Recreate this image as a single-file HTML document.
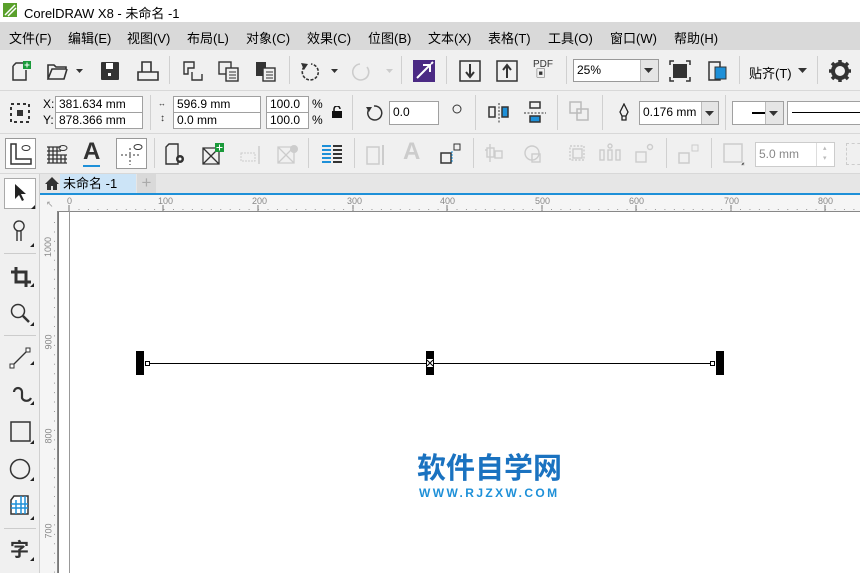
<!DOCTYPE html>
<html><head><meta charset="utf-8"><style>
*{margin:0;padding:0;box-sizing:border-box}
body{width:860px;height:573px;overflow:hidden;background:#f0f0f0;font-family:"Liberation Sans","Noto Sans CJK SC",sans-serif;position:relative;font-size:12px;color:#000}
.a{position:absolute}
.menu span{position:absolute;top:6px;font-size:13px}
.inp{position:absolute;background:#fff;border:1px solid #a0a0a0;font-size:12px;padding-left:3px;line-height:15px}
.sep{position:absolute;width:1px;background:#d0d0d0}
.hl{position:absolute;height:1px;background:#d8d8d8}
.ic{position:absolute}
.rl{position:absolute;font-size:9px;color:#888}
</style></head><body>
<div class="a" style="left:0;top:0;width:860px;height:22px;background:#fff"></div>
<svg class="a" style="left:3px;top:3px" width="14" height="14"><rect width="14" height="14" fill="#5aa02c"/><path d="M2 12 L12 2 M5 13 L13 5" stroke="#fff" stroke-width="1.5"/></svg>
<div class="a" style="left:24px;top:3px;font-size:13px">CorelDRAW X8 - 未命名 -1</div>
<div class="a menu" style="left:0;top:22px;width:860px;height:28px;background:#d9d9d9">
<span style="left:9px">文件(F)</span><span style="left:68px">编辑(E)</span><span style="left:127px">视图(V)</span><span style="left:187px">布局(L)</span><span style="left:246px">对象(C)</span><span style="left:307px">效果(C)</span><span style="left:368px">位图(B)</span><span style="left:428px">文本(X)</span><span style="left:488px">表格(T)</span><span style="left:548px">工具(O)</span><span style="left:610px">窗口(W)</span><span style="left:674px">帮助(H)</span>
</div>
<div class="hl" style="left:0;top:90px;width:860px"></div>
<div class="hl" style="left:0;top:133px;width:860px"></div>
<div class="hl" style="left:0;top:173px;width:860px"></div>
<svg class="ic" style="left:9px;top:60px" width="22" height="22"><path d="M4 6 L7 3 H14 M4 6 V20 H17 V10" fill="none" stroke="#333" stroke-width="1.5"/><rect x="14" y="1" width="8" height="8" fill="#1a9a3a"/><path d="M18 2.5V7.5M15.5 5H20.5" stroke="#fff"/></svg>
<svg class="ic" style="left:46px;top:61px" width="40" height="20"><path d="M2 18 V4 H8 L10 6 H20 V8 H6 L2 18 H18 L21 8" fill="none" stroke="#333" stroke-width="1.6"/><path d="M30 8 h7 l-3.5 4z" fill="#333"/></svg>
<svg class="ic" style="left:100px;top:61px" width="20" height="20"><rect x="1" y="1" width="18" height="18" rx="1" fill="#333"/><rect x="6" y="2" width="7" height="6" fill="#fff"/><rect x="8" y="12" width="3" height="3" fill="#fff"/></svg>
<svg class="ic" style="left:137px;top:60px" width="22" height="22"><path d="M5 12 V2 H14 V12 M1 12 H21 V20 H1Z" fill="none" stroke="#333" stroke-width="1.6"/></svg>
<div class="sep" style="left:169px;top:56px;height:28px"></div>
<svg class="ic" style="left:182px;top:60px" width="22" height="22"><path d="M2 2 H12 V8 H6 V14 H2Z M10 12 V20 H20 V14" fill="none" stroke="#333" stroke-width="1.4"/></svg>
<svg class="ic" style="left:218px;top:60px" width="22" height="22"><rect x="1" y="2" width="12" height="12" fill="none" stroke="#333" stroke-width="1.4"/><rect x="8" y="8" width="12" height="13" fill="#f0f0f0" stroke="#333" stroke-width="1.4"/><path d="M11 12h7M11 15h7M11 18h7" stroke="#333"/></svg>
<svg class="ic" style="left:255px;top:60px" width="22" height="22"><rect x="1" y="2" width="10" height="14" fill="#333"/><rect x="8" y="8" width="12" height="13" fill="#f0f0f0" stroke="#333" stroke-width="1.4"/><path d="M11 12h7M11 15h7M11 18h7" stroke="#333"/></svg>
<div class="sep" style="left:289px;top:56px;height:28px"></div>
<svg class="ic" style="left:299px;top:61px" width="45" height="20"><path d="M5 6 A8 8 0 1 0 12 3" fill="none" stroke="#333" stroke-width="1.6" stroke-dasharray="3 1.5"/><path d="M2 2 L9 3 L5 9z" fill="#333"/><path d="M32 8 h7 l-3.5 4z" fill="#333"/></svg>
<svg class="ic" style="left:352px;top:61px" width="45" height="20"><path d="M15 6 A8 8 0 1 1 8 3" fill="none" stroke="#ccc" stroke-width="1.6"/><path d="M34 8 h7 l-3.5 4z" fill="#ccc"/></svg>
<div class="sep" style="left:401px;top:56px;height:28px"></div>
<svg class="ic" style="left:413px;top:60px" width="22" height="22"><rect width="22" height="22" fill="#4b2a84"/><path d="M4 18 L17 5 M10 5 H17 V12 M18 4 L20 2" stroke="#fff" stroke-width="2" fill="none"/></svg>
<div class="sep" style="left:446px;top:56px;height:28px"></div>
<svg class="ic" style="left:459px;top:60px" width="22" height="22"><rect x="1" y="1" width="20" height="20" fill="none" stroke="#333" stroke-width="1.5"/><path d="M11 4 V16 M7 12 L11 17 L15 12" stroke="#333" stroke-width="2" fill="none"/></svg>
<svg class="ic" style="left:496px;top:60px" width="22" height="22"><rect x="1" y="1" width="20" height="20" fill="none" stroke="#333" stroke-width="1.5"/><path d="M11 18 V6 M7 10 L11 5 L15 10" stroke="#333" stroke-width="2" fill="none"/></svg>
<div class="a" style="left:533px;top:60px;font-size:10px;color:#333;line-height:10px">PDF<br>&nbsp;▣</div>
<div class="sep" style="left:566px;top:56px;height:28px"></div>
<div class="inp" style="left:573px;top:59px;width:86px;height:23px;line-height:20px;border-color:#999">25%</div>
<div class="a" style="left:640px;top:60px;width:18px;height:21px;background:#e5e5e5;border-left:1px solid #bbb"></div>
<svg class="a" style="left:644px;top:68px" width="10" height="6"><path d="M0 0h9l-4.5 5z" fill="#333"/></svg>
<svg class="ic" style="left:669px;top:60px" width="22" height="22"><rect x="4" y="4" width="14" height="14" fill="#333"/><path d="M1 5V1H5M17 1H21V5M21 17V21H17M5 21H1V17" fill="none" stroke="#333" stroke-width="1.5"/></svg>
<svg class="ic" style="left:707px;top:60px" width="22" height="22"><rect x="2" y="2" width="11" height="18" fill="none" stroke="#333" stroke-width="1.5"/><rect x="8" y="7" width="11" height="12" fill="#1e90d8" stroke="#333"/></svg>
<div class="sep" style="left:739px;top:56px;height:28px"></div>
<div class="a" style="left:749px;top:63px;font-size:13px">贴齐(T)</div>
<svg class="a" style="left:798px;top:68px" width="10" height="6"><path d="M0 0h9l-4.5 5z" fill="#333"/></svg>
<div class="sep" style="left:817px;top:56px;height:28px"></div>
<svg class="ic" style="left:829px;top:60px" width="22" height="22"><circle cx="11" cy="11" r="7" fill="none" stroke="#333" stroke-width="4"/><path d="M11 0v5M11 17v5M0 11h5M17 11h5M3 3l4 4M15 15l4 4M19 3l-4 4M3 19l4-4" stroke="#333" stroke-width="3.5"/></svg>
<svg class="ic" style="left:10px;top:103px" width="20" height="20"><path d="M1 1h18v18H1z" fill="none" stroke="#333" stroke-width="2" stroke-dasharray="3 3"/><rect x="7" y="7" width="6" height="6" fill="#333"/></svg>
<div class="a" style="left:43px;top:97px;font-size:12px">X:</div>
<div class="a" style="left:43px;top:113px;font-size:12px">Y:</div>
<div class="inp" style="left:55px;top:96px;width:88px;height:17px">381.634 mm</div>
<div class="inp" style="left:55px;top:112px;width:88px;height:17px">878.366 mm</div>
<div class="sep" style="left:150px;top:95px;height:35px"></div>
<div class="a" style="left:158px;top:99px;font-size:8px;color:#333">↔</div>
<div class="a" style="left:160px;top:113px;font-size:10px;color:#333">↕</div>
<div class="inp" style="left:173px;top:96px;width:88px;height:17px">596.9 mm</div>
<div class="inp" style="left:173px;top:112px;width:88px;height:17px">0.0 mm</div>
<div class="inp" style="left:266px;top:96px;width:43px;height:17px">100.0</div>
<div class="inp" style="left:266px;top:112px;width:43px;height:17px">100.0</div>
<div class="a" style="left:312px;top:97px">%</div><div class="a" style="left:312px;top:113px">%</div>
<svg class="ic" style="left:332px;top:106px" width="10" height="12"><path d="M2 5V3a3 3 0 0 1 6 0" fill="none" stroke="#111" stroke-width="1.5"/><rect y="5" width="10" height="7" fill="#111"/></svg>
<div class="sep" style="left:352px;top:95px;height:35px"></div>
<svg class="ic" style="left:365px;top:104px" width="18" height="18"><path d="M4 5 A7 7 0 1 0 9 2" fill="none" stroke="#333" stroke-width="1.5"/><path d="M1 3l6 0-3 5z" fill="#333"/></svg>
<div class="inp" style="left:389px;top:101px;width:50px;height:24px;line-height:21px">0.0</div>
<svg class="ic" style="left:452px;top:104px" width="10" height="10"><circle cx="5" cy="5" r="4" fill="none" stroke="#333"/></svg>
<div class="sep" style="left:475px;top:95px;height:35px"></div>
<svg class="ic" style="left:488px;top:101px" width="22" height="22"><path d="M1 6h6v10H1z" fill="none" stroke="#333" stroke-width="1.5"/><path d="M11 2v20" stroke="#333" stroke-dasharray="2 1.5"/><path d="M14 6h6v10h-6z" fill="#1e90d8" stroke="#333" stroke-width="1.5"/></svg>
<svg class="ic" style="left:524px;top:101px" width="22" height="22"><path d="M6 1h10v6H6z" fill="none" stroke="#333" stroke-width="1.5"/><path d="M0 12h22" stroke="#333" stroke-dasharray="2 1.5"/><path d="M6 15h10v6H6z" fill="#1e90d8" stroke="#333" stroke-width="1.5"/></svg>
<div class="sep" style="left:557px;top:95px;height:35px"></div>
<svg class="ic" style="left:569px;top:101px" width="22" height="22"><rect x="1" y="1" width="11" height="11" fill="none" stroke="#bbb" stroke-width="1.5"/><rect x="8" y="8" width="11" height="11" fill="none" stroke="#bbb" stroke-width="1.5"/></svg>
<div class="sep" style="left:602px;top:95px;height:35px"></div>
<svg class="ic" style="left:618px;top:103px" width="12" height="18"><path d="M6 1 L10 9 L8 13 H4 L2 9Z M4 13v4h4v-4" fill="none" stroke="#222" stroke-width="1.3"/></svg>
<div class="inp" style="left:639px;top:101px;width:80px;height:24px;line-height:21px">0.176 mm</div>
<div class="a" style="left:701px;top:102px;width:17px;height:22px;background:#e5e5e5;border-left:1px solid #bbb"></div>
<svg class="a" style="left:705px;top:111px" width="10" height="6"><path d="M0 0h9l-4.5 5z" fill="#333"/></svg>
<div class="sep" style="left:725px;top:95px;height:35px"></div>
<div class="inp" style="left:732px;top:101px;width:52px;height:24px"></div>
<div class="a" style="left:752px;top:112px;width:13px;height:2px;background:#000"></div>
<div class="a" style="left:765px;top:102px;width:18px;height:22px;background:#e5e5e5;border-left:1px solid #bbb"></div>
<svg class="a" style="left:769px;top:111px" width="10" height="6"><path d="M0 0h9l-4.5 5z" fill="#333"/></svg>
<div class="inp" style="left:787px;top:101px;width:80px;height:24px"></div>
<div class="a" style="left:792px;top:112px;width:70px;height:1px;background:#000"></div>
<div class="a" style="left:5px;top:138px;width:31px;height:31px;background:#fff;border:1px solid #999"></div>
<svg class="ic" style="left:10px;top:143px" width="22" height="22"><path d="M1 1v20h20v-5h-15v-15z" fill="none" stroke="#333" stroke-width="1.5"/><ellipse cx="16" cy="5" rx="4" ry="2.5" fill="none" stroke="#333"/></svg>
<svg class="ic" style="left:46px;top:143px" width="22" height="22"><path d="M1 4h14M1 8h14M1 12h20M1 16h20M1 20h20M3 4v16M7 4v16M11 4v16M15 12v8M19 12v8" stroke="#333" stroke-width="1.3"/><ellipse cx="17" cy="5" rx="4" ry="2.5" fill="none" stroke="#333"/></svg>
<div class="a" style="left:83px;top:139px;font-size:24px;font-weight:bold;color:#333;line-height:26px;border-bottom:2px solid #1e90d8">A</div>
<div class="a" style="left:116px;top:138px;width:31px;height:31px;background:#fff;border:1px solid #999"></div>
<svg class="ic" style="left:120px;top:143px" width="24" height="22"><path d="M1 12h20M10 5v17" stroke="#333" stroke-dasharray="2 2"/><ellipse cx="18" cy="4" rx="4" ry="2.5" fill="none" stroke="#333"/></svg>
<div class="sep" style="left:154px;top:138px;height:30px"></div>
<svg class="ic" style="left:165px;top:143px" width="24" height="24"><path d="M1 4l3-3h9v20H1z" fill="none" stroke="#333" stroke-width="1.4"/><circle cx="15" cy="16" r="4" fill="#333"/><circle cx="15" cy="16" r="1.5" fill="#fff"/></svg>
<svg class="ic" style="left:202px;top:143px" width="22" height="22"><path d="M1 5h16v16H1zM1 5l16 16M17 5L1 21" fill="none" stroke="#333" stroke-width="1.3"/><rect x="13" y="0" width="9" height="9" fill="#1a9a3a"/><path d="M17.5 1.5v6M14.5 4.5h6" stroke="#fff"/></svg>
<svg class="ic" style="left:240px;top:144px" width="22" height="22"><rect x="1" y="9" width="14" height="8" fill="none" stroke="#ccc" stroke-dasharray="2 1"/><path d="M19 2v18" stroke="#ccc" stroke-width="1.5"/></svg>
<svg class="ic" style="left:277px;top:144px" width="22" height="22"><path d="M1 3h16v16H1zM1 3l16 16M17 3L1 19" fill="none" stroke="#ccc" stroke-width="1.3"/><circle cx="17" cy="5" r="4" fill="#ccc"/></svg>
<div class="sep" style="left:308px;top:138px;height:30px"></div>
<svg class="ic" style="left:321px;top:144px" width="22" height="20"><path d="M1 2h9M1 6h9M1 10h9M1 14h9M1 18h9" stroke="#1e90d8" stroke-width="2"/><path d="M12 2h9M12 6h9M12 10h9M12 14h9M12 18h9" stroke="#333" stroke-width="2"/></svg>
<div class="sep" style="left:354px;top:138px;height:30px"></div>
<svg class="ic" style="left:366px;top:144px" width="22" height="22"><rect x="1" y="3" width="12" height="17" fill="none" stroke="#ccc" stroke-width="1.5"/><path d="M17 1v20" stroke="#ccc" stroke-width="2"/></svg>
<div class="a" style="left:403px;top:139px;font-size:24px;font-weight:bold;color:#ccc;line-height:26px">A</div>
<svg class="ic" style="left:440px;top:143px" width="22" height="22"><rect x="1" y="10" width="10" height="10" fill="none" stroke="#333" stroke-width="1.5"/><rect x="14" y="1" width="6" height="6" fill="none" stroke="#333"/><path d="M12 8v12" stroke="#1e90d8" stroke-dasharray="2 1"/></svg>
<div class="sep" style="left:473px;top:138px;height:30px"></div>
<svg class="ic" style="left:484px;top:142px" width="180" height="24"><g fill="none" stroke="#ccc" stroke-width="1.4">
<rect x="3" y="6" width="7" height="9"/><rect x="11" y="9" width="7" height="7"/><path d="M1 8h2M6 2v18"/>
<circle cx="48" cy="11" r="7"/><rect x="48" y="12" width="8" height="8"/>
<rect x="86" y="4" width="14" height="14" stroke-dasharray="2 1.5"/><rect x="89" y="7" width="9" height="9"/>
<rect x="116" y="8" width="4" height="10"/><rect x="124" y="8" width="4" height="10"/><rect x="132" y="8" width="4" height="10"/><circle cx="126" cy="4" r="2"/>
<rect x="152" y="10" width="10" height="10"/><circle cx="166" cy="5" r="2.5"/></g></svg>
<div class="sep" style="left:666px;top:138px;height:30px"></div>
<svg class="ic" style="left:678px;top:144px" width="22" height="22"><rect x="1" y="9" width="10" height="10" fill="none" stroke="#ccc" stroke-width="1.5"/><rect x="14" y="1" width="6" height="6" fill="none" stroke="#ccc"/></svg>
<div class="sep" style="left:711px;top:138px;height:30px"></div>
<svg class="ic" style="left:723px;top:143px" width="24" height="24"><rect x="1" y="1" width="18" height="18" fill="none" stroke="#ccc" stroke-width="1.5"/><path d="M21 19v3h-3" stroke="#ccc"/></svg>
<div class="inp" style="left:755px;top:142px;width:80px;height:25px;line-height:22px;color:#888;border-color:#ccc">5.0 mm</div>
<div class="a" style="left:816px;top:143px;width:1px;height:23px;background:#ddd"></div>
<div class="a" style="left:823px;top:144px;font-size:7px;color:#bbb;line-height:10px">▴<br>▾</div>
<div class="a" style="left:846px;top:143px;width:20px;height:22px;border:1px dashed #ccc"></div>
<div class="a" style="left:40px;top:174px;width:820px;height:19px;background:#e6e6e6"></div>
<svg class="a" style="left:45px;top:177px" width="14" height="13"><path d="M7 0L0 7h2v6h4v-4h2v4h4V7h2z" fill="#333"/></svg>
<div class="a" style="left:60px;top:174px;width:76px;height:19px;background:#cce4f7;font-size:13px;padding-left:3px;line-height:19px">未命名 -1</div>
<div class="a" style="left:137px;top:174px;width:19px;height:19px;background:#d9d9d9;color:#aaa;font-size:17px;text-align:center;line-height:18px">+</div>
<div class="a" style="left:40px;top:193px;width:820px;height:2px;background:#1e90d8"></div>
<div class="a" style="left:40px;top:195px;width:820px;height:16px;background:#f5f5f5"></div>
<div class="a" style="left:40px;top:195px;width:17px;height:378px;background:#f5f5f5"></div>
<svg class="a" style="left:40px;top:195px" width="820" height="378">
<g stroke="#777" stroke-width="1">
<path d="M29 10v6M123 10v6M218 10v6M313 10v6M407 10v6M502 10v6M596 10v6M691 10v6M785 10v6"/>
<path d="M17 45h5M17 140h5M17 234h5M17 329h5" />
</g>
<g stroke="#999" stroke-dasharray="1 8.45"><path d="M38.5 14.5H820"/><path d="M14.5 27V378"/></g>
<path d="M17.5 16V378M17 16.5H820" stroke="#888"/>
<path d="M29.5 16V378" stroke="#999"/>
<text x="6" y="12" font-size="9" fill="#999" font-family="Liberation Sans">↖</text>
</svg>
<div class="rl" style="left:67px;top:196px">0</div><div class="rl" style="left:158px;top:196px">100</div><div class="rl" style="left:252px;top:196px">200</div><div class="rl" style="left:347px;top:196px">300</div><div class="rl" style="left:440px;top:196px">400</div><div class="rl" style="left:535px;top:196px">500</div><div class="rl" style="left:629px;top:196px">600</div><div class="rl" style="left:724px;top:196px">700</div><div class="rl" style="left:818px;top:196px">800</div>
<div class="rl" style="left:38px;top:242px;transform:rotate(-90deg)">1000</div>
<div class="rl" style="left:41px;top:337px;transform:rotate(-90deg)">900</div>
<div class="rl" style="left:41px;top:431px;transform:rotate(-90deg)">800</div>
<div class="rl" style="left:41px;top:526px;transform:rotate(-90deg)">700</div>
<div class="a" style="left:58px;top:212px;width:802px;height:361px;background:#fff;border-left:1px solid #777"></div>
<div class="a" style="left:69px;top:212px;width:1px;height:361px;background:#999"></div>
<svg class="a" style="left:130px;top:345px" width="600" height="35">
<path d="M17 18.5H583" stroke="#000"/>
<rect x="6" y="6" width="8" height="24" fill="#000"/>
<rect x="15.5" y="16.5" width="4" height="4" fill="#fff" stroke="#000"/>
<rect x="296" y="6" width="8" height="24" fill="#000"/>
<rect x="297" y="14" width="6" height="8" fill="#fff"/><path d="M297 15l6 6M303 15l-6 6" stroke="#000"/>
<rect x="580.5" y="16.5" width="4" height="4" fill="#fff" stroke="#000"/>
<rect x="586" y="6" width="8" height="24" fill="#000"/>
</svg>
<div class="a" style="left:417px;top:453px;font-size:29px;font-weight:bold;color:#1a72c0;letter-spacing:0;line-height:33px">软件自学网</div>
<div class="a" style="left:419px;top:486px;font-size:12px;font-weight:bold;color:#1e90d8;letter-spacing:2.4px;line-height:14px">WWW.RJZXW.COM</div>
<div class="a" style="left:39px;top:174px;width:1px;height:399px;background:#d0d0d0"></div>
<div class="a" style="left:4px;top:178px;width:32px;height:31px;background:#fff;border:1px solid #aaa"></div>
<svg class="ic" style="left:13px;top:183px" width="14" height="20"><path d="M2 1v15l4-4 3 6 2-1-3-6h5z" fill="#222"/></svg>
<svg class="ic" style="left:11px;top:220px" width="16" height="22"><path d="M8 1a5 5 0 1 0 0.1 0M6 10v11M10 10v11" fill="none" stroke="#333" stroke-width="1.4"/></svg>
<div class="hl" style="left:4px;top:253px;width:32px;background:#ccc"></div>
<svg class="ic" style="left:10px;top:266px" width="22" height="22"><path d="M6 1v15h15M1 6h15v15" fill="none" stroke="#333" stroke-width="3"/></svg>
<svg class="ic" style="left:10px;top:303px" width="22" height="22"><circle cx="8" cy="8" r="6.5" fill="none" stroke="#333" stroke-width="1.5"/><path d="M13 13l6 6" stroke="#333" stroke-width="2.5"/></svg>
<div class="hl" style="left:4px;top:335px;width:32px;background:#ccc"></div>
<svg class="ic" style="left:9px;top:347px" width="22" height="22"><path d="M3 19L19 3" stroke="#333" stroke-width="1.3"/><rect x="1" y="17" width="4" height="4" fill="#fff" stroke="#333"/><rect x="17" y="1" width="4" height="4" fill="#fff" stroke="#333"/></svg>
<svg class="ic" style="left:10px;top:384px" width="22" height="24"><path d="M4 8a4 4 0 0 1 8 0v6a5 5 0 0 0 9 0" fill="none" stroke="#333" stroke-width="2.2"/></svg>
<svg class="ic" style="left:10px;top:421px" width="22" height="22"><rect x="1" y="1" width="19" height="19" fill="none" stroke="#333" stroke-width="1.5"/></svg>
<svg class="ic" style="left:9px;top:458px" width="22" height="22"><circle cx="11" cy="11" r="9.5" fill="none" stroke="#333" stroke-width="1.5"/></svg>
<svg class="ic" style="left:10px;top:495px" width="22" height="22"><path d="M4 1h14v18H1V5z" fill="#fff" stroke="#333" stroke-width="1.5"/><path d="M1 9h17M1 13h17M6 5v14M11 1v18M15 1v18" stroke="#1e90d8" stroke-width="1.5"/></svg>
<div class="hl" style="left:4px;top:528px;width:32px;background:#ccc"></div>
<div class="a" style="left:10px;top:540px;font-size:19px;font-weight:bold;color:#333;line-height:22px">字</div>
<svg class="a" style="left:0;top:0" width="40" height="573"><g fill="#222"><path d="M35 205v4h-4z M34 243v4h-4z M34 283v4h-4z M34 322v4h-4z M34 361v4h-4z M34 401v4h-4z M34 440v4h-4z M34 477v4h-4z M34 516v4h-4z M34 557v4h-4z"/></g></svg>
</body></html>
